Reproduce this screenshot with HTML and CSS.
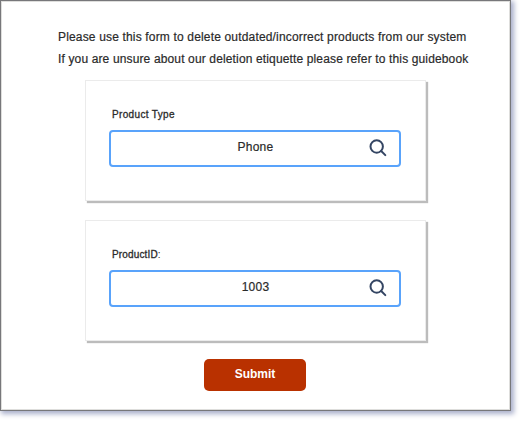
FILE: index.html
```html
<!DOCTYPE html>
<html lang="en">
<head>
<meta charset="utf-8">
<title>Delete products</title>
<link rel="stylesheet" href="styles.css">
</head>
<body>
<main class="window">
  <div class="intro">
    <p class="intro-first">Please use this form to delete outdated/incorrect products from our system</p>
    <p class="intro-second">If you are unsure about our deletion etiquette please refer to this guidebook</p>
  </div>
  <section class="card">
    <div class="label">Product Type</div>
    <div class="field">
      <span class="value">Phone</span>
      <svg class="search" viewBox="0 0 18 18"><circle cx="7.7" cy="7.5" r="6.2"/><path d="M12.2 12L16.3 16.1"/></svg>
    </div>
  </section>
  <section class="card card-id">
    <div class="label label-id">ProductID<span class="colon">:</span></div>
    <div class="field">
      <span class="value">1003</span>
      <svg class="search" viewBox="0 0 18 18"><circle cx="7.7" cy="7.5" r="6.2"/><path d="M12.2 12L16.3 16.1"/></svg>
    </div>
  </section>
  <button class="submit" type="button">Submit</button>
</main>
</body>
</html>
```
FILE: styles.css
```css
* { box-sizing: border-box; }
body {
  margin: 0;
  min-height: 422px;
  background: #fff;
  font-family: "Liberation Sans", Arial, sans-serif;
  color: #2a2a2a;
}
.window {
  width: 511px;
  height: 411px;
  padding: 25px 0 0 84px;
  border: 1px solid #77777a;
  box-shadow: inset 0 0 0 1px #dededc, 2px 2px 5px 1px #a9afcb;
}
.intro {
  margin-left: -27px;
  font-size: 12px;
  line-height: 22px;
  white-space: nowrap;
  -webkit-text-stroke: 0.2px #2a2a2a;
}
.intro p { margin: 0; }
.intro-first { letter-spacing: 0.165px; }
.intro-second { letter-spacing: 0.14px; }
.card {
  width: 341px;
  height: 121px;
  margin-top: 10px;
  padding: 27px 23px 0;
  border: 1px solid #ebebeb;
  box-shadow: 2px 2px 1px #bcbcbc;
}
.card-id { margin-top: 19px; }
.label {
  height: 14px;
  margin: 0 0 8px 3px;
  font-size: 10px;
  line-height: 14px;
  letter-spacing: 0.35px;
  -webkit-text-stroke: 0.3px #2a2a2a;
}
.label-id { letter-spacing: 0.15px; }
.colon { -webkit-text-stroke: 0; }
.field {
  display: flex;
  align-items: center;
  width: 292px;
  height: 37px;
  padding: 0 12px 1px 0;
  border: 2px solid #59a3fb;
  border-radius: 4px;
}
.value {
  flex: 1;
  padding-left: 31px;
  margin-top: -3px;
  text-align: center;
  font-size: 12px;
  letter-spacing: 0.25px;
  -webkit-text-stroke: 0.2px #2a2a2a;
}
.search {
  width: 18px;
  height: 18px;
  fill: none;
  stroke: #344563;
  stroke-width: 2;
  stroke-linecap: round;
}
.submit {
  display: block;
  width: 102px;
  height: 32px;
  margin: 18px 0 0 119px;
  padding: 0 0 2px;
  border: 0;
  border-radius: 5px;
  background: #b93100;
  color: #fff;
  font: bold 12px "Liberation Sans", Arial, sans-serif;
}
```
